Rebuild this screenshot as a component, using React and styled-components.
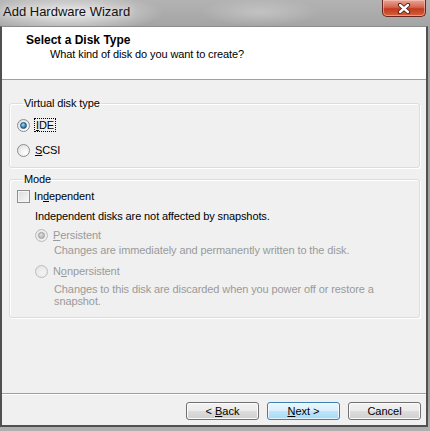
import React from "react";
import styled, { createGlobalStyle } from "styled-components";

const Global = createGlobalStyle`
  html, body { margin: 0; padding: 0; }
  body {
    width: 430px;
    height: 431px;
    overflow: hidden;
    font-family: "Liberation Sans", Arial, sans-serif;
    font-size: 11px;
    letter-spacing: -0.1px;
    color: #000;
  }
`;

const Window = styled.div`
  width: 430px;
  height: 431px;
  display: flex;
  flex-direction: column;
  background:
    radial-gradient(ellipse 95px 20px at 68px 13px, rgba(236,236,236,0.95), rgba(236,236,236,0) 100%),
    radial-gradient(ellipse 60px 14px at 260px 12px, rgba(200,200,200,0.8), rgba(200,200,200,0) 100%),
    linear-gradient(#b3b3b3, #a2a2a2 30px, #9f9f9f 400px, #b0b0b0);
`;

const TitleBar = styled.div`
  height: 26px;
  flex: none;
  display: flex;
  align-items: flex-start;
  justify-content: space-between;
`;

const Caption = styled.div`
  font-size: 13px;
  letter-spacing: 0;
  line-height: 16px;
  padding: 4px 0 0 3px;
  color: #111;
  text-shadow: 0 0 6px rgba(255,255,255,0.9);
`;

const CloseButton = styled.div`
  width: 44px;
  height: 17px;
  margin-right: 4px;
  box-sizing: border-box;
  border: 1px solid #6a261c;
  border-top: none;
  border-radius: 0 0 5px 5px;
  background: linear-gradient(#e9a596, #d4664f 45%, #c23a1f 55%, #d8603c);
  box-shadow: inset 0 0 0 1px rgba(255,210,200,0.5);
  display: flex;
  align-items: center;
  justify-content: center;
`;

const Client = styled.div`
  width: 428px;
  height: 401px;
  flex: none;
  box-sizing: border-box;
  border-left: 2px solid #505050;
  border-right: 2px solid #505050;
  border-bottom: 2px solid #505050;
  border-top: 1px solid #8c8c8c;
  background: #f0f0f0;
  display: flex;
  flex-direction: column;
`;

const Header = styled.div`
  height: 53px;
  flex: none;
  box-sizing: border-box;
  background: #fff;
  border-bottom: 1px solid #a0a0a0;
  padding: 6px 0 0 24px;
`;

const HeaderTitle = styled.div`
  font-weight: bold;
  font-size: 12px;
  letter-spacing: 0;
  line-height: 14px;
`;

const HeaderSub = styled.div`
  line-height: 14px;
  padding-left: 24px;
`;

const Body = styled.div`
  flex: 1;
  display: flex;
  flex-direction: column;
  gap: 4px;
  padding: 16px 6px 0 7px;
`;

const Group = styled.fieldset`
  margin: 0;
  padding: ${p => p.$pad};
  border: 1px solid #d5dfe5;
  border-radius: 3px;
  box-shadow: inset 1px 1px 0 #fff, 1px 1px 0 #fff;
  display: flex;
  flex-direction: column;
`;

const Legend = styled.legend`
  padding: 0 1px;
  margin-left: 6px;
  line-height: 14px;
`;

const Row = styled.label`
  display: flex;
  align-items: center;
  height: 16px;
  margin-top: ${p => p.$mt || 0}px;
  margin-left: ${p => p.$ml || 0}px;
  color: ${p => (p.$disabled ? "#9a9a9a" : "#000")};
`;

const Radio = styled.span`
  width: 11px;
  height: 11px;
  flex: none;
  border-radius: 50%;
  border: 1px solid ${p => (p.$disabled ? "#bcbcbc" : "#8a8e92")};
  background: ${p =>
    p.$disabled
      ? "radial-gradient(circle at 60% 65%, #f4f4f4, #e2e2e2)"
      : "radial-gradient(circle at 65% 70%, #ffffff, #dcdcdc)"};
  display: flex;
  align-items: center;
  justify-content: center;
  margin-right: 5px;

  &::after {
    content: "";
    display: ${p => (p.$checked ? "block" : "none")};
    width: 5px;
    height: 5px;
    border-radius: 50%;
    border: 1px solid ${p => (p.$disabled ? "#9c9c9c" : "#1e4f75")};
    background: ${p =>
      p.$disabled
        ? "radial-gradient(circle at 40% 35%, #e0e0e0, #a8a8a8)"
        : "radial-gradient(circle at 40% 35%, #a7dcf6, #2a7fbb 60%, #1a5a8a)"};
  }
`;

const Check = styled.span`
  width: 11px;
  height: 11px;
  flex: none;
  border: 1px solid #8e8f8f;
  background: linear-gradient(135deg, #dcdcdc, #f8f8f8);
  box-shadow: inset 0 0 0 1px #f4f4f4;
  margin-right: 4px;
`;

const Focus = styled.span`
  outline: 1px dotted #000;
  outline-offset: 0;
  padding: 0 1px;
  line-height: 12px;
`;

const Note = styled.div`
  line-height: 14px;
  margin-top: ${p => p.$mt || 0}px;
  margin-left: ${p => p.$ml || 0}px;
  color: ${p => (p.$disabled ? "#9a9a9a" : "#000")};
`;

const Desc = styled.div`
  line-height: 12px;
  margin-top: ${p => p.$mt || 0}px;
  padding-left: 37px;
  padding-right: 30px;
  color: #9a9a9a;
`;

const Footer = styled.div`
  height: 32px;
  flex: none;
  box-sizing: border-box;
  border-top: 1px solid #a0a0a0;
  box-shadow: inset 0 1px 0 #fff;
  padding: 8px 5px 0 0;
  display: flex;
  justify-content: flex-end;
  align-items: flex-start;
  gap: 8px;
`;

const Button = styled.button`
  width: 73px;
  height: 18px;
  padding: 0;
  font: inherit;
  font-size: 11px;
  line-height: 14px;
  color: #000;
  border-radius: 3px;
  border: 1px solid ${p => (p.$primary ? "#3c7fb1" : "#707070")};
  background: ${p =>
    p.$primary
      ? "linear-gradient(#eaf6fd, #d9f0fc 50%, #bee6fd 50%, #a7d9f5)"
      : "linear-gradient(#f2f2f2, #ebebeb 50%, #dddddd 50%, #cfcfcf)"};
  box-shadow: inset 0 0 0 1px ${p => (p.$primary ? "rgba(255,255,255,0.7)" : "#fcfcfc")};
`;

const U = styled.span`
  text-decoration: underline;
  text-underline-offset: 1px;
`;

const CloseGlyph = () => (
  <svg width="14" height="11" viewBox="0 0 14 11">
    <path d="M3 2 L11 9 M11 2 L3 9" stroke="#4a1a14" strokeWidth="4.2" strokeLinecap="round" />
    <path d="M3 2 L11 9 M11 2 L3 9" stroke="#fff" strokeWidth="2.4" strokeLinecap="round" />
  </svg>
);

export default function App() {
  return (
    <>
      <Global />
      <Window>
        <TitleBar>
          <Caption>Add Hardware Wizard</Caption>
          <CloseButton>
            <CloseGlyph />
          </CloseButton>
        </TitleBar>
        <Client>
          <Header>
            <HeaderTitle>Select a Disk Type</HeaderTitle>
            <HeaderSub>What kind of disk do you want to create?</HeaderSub>
          </Header>
          <Body>
            <Group $pad="7px 6px 9px 7px">
              <Legend>Virtual disk type</Legend>
              <Row>
                <Radio $checked />
                <Focus><U>I</U>DE</Focus>
              </Row>
              <Row $mt={9}>
                <Radio />
                <span><U>S</U>CSI</span>
              </Row>
            </Group>
            <Group $pad="2px 6px 10px 7px">
              <Legend>Mode</Legend>
              <Row>
                <Check />
                <span>In<U>d</U>ependent</span>
              </Row>
              <Note $mt={5} $ml={18}>Independent disks are not affected by snapshots.</Note>
              <Row $mt={4} $ml={18} $disabled>
                <Radio $checked $disabled />
                <span><U>P</U>ersistent</span>
              </Row>
              <Desc $mt={1}>Changes are immediately and permanently written to the disk.</Desc>
              <Row $mt={7} $ml={18} $disabled>
                <Radio $disabled />
                <span>N<U>o</U>npersistent</span>
              </Row>
              <Desc $mt={4}>Changes to this disk are discarded when you power off or restore a snapshot.</Desc>
            </Group>
          </Body>
          <Footer>
            <Button>&lt; <U>B</U>ack</Button>
            <Button $primary><U>N</U>ext &gt;</Button>
            <Button>Cancel</Button>
          </Footer>
        </Client>
      </Window>
    </>
  );
}
